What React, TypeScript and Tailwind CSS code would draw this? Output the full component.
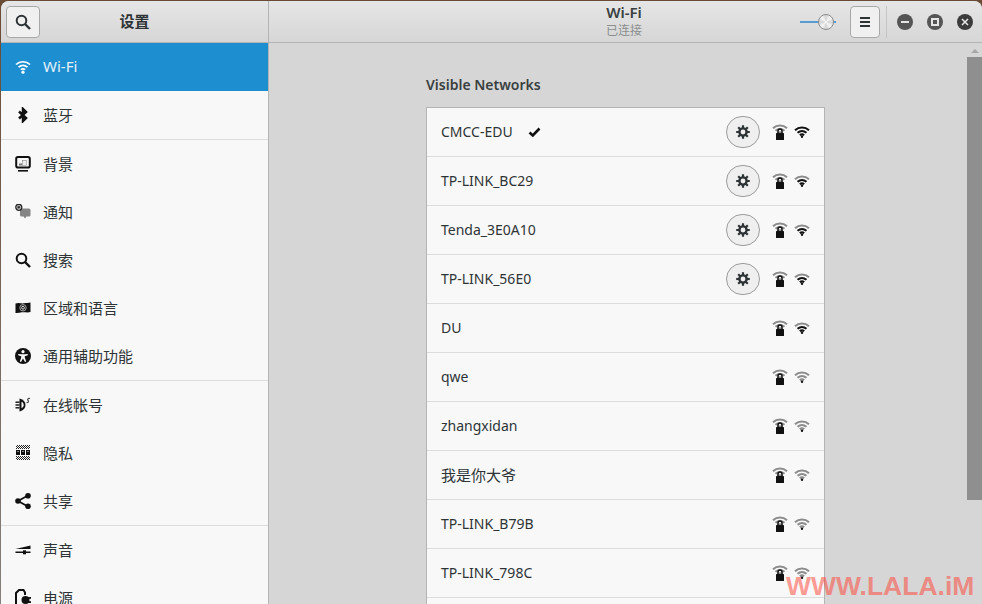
import React from 'react';

const FONT = { fontFamily: '"Noto Sans", "Noto Sans CJK SC", sans-serif' };

const WifiGlyph = ({ strong, mid, weak, dot }: { strong: string; mid: string; weak: string; dot: string }) => (
    <svg className="block" width="16" height="12" viewBox="0 0 16 12" fill="none" strokeWidth="2.100">
        <path d="M1 4.200C5 0.500 11 0.500 15 4.200" stroke={strong} />
        <path d="M3.500 6.800C6.200 4.600 9.800 4.600 12.500 6.800" stroke={mid} />
        <path d="M5.800 9.200C7.200 8.200 8.800 8.200 10.200 9.200" stroke={weak} />
        <circle cx="8" cy="10.800" r="1.200" fill={dot} />
    </svg>
);

const Signal = ({ level }: { level: number }) => {
    const on = '#111';
    const off = '#8c8c8c';
    return <WifiGlyph strong={level > 3 ? on : off} mid={level > 2 ? on : off} weak={level > 1 ? on : off} dot={on} />;
};

const LockedSignal = () => (
    <div className="relative w-4 h-4">
        <WifiGlyph strong="#8c8c8c" mid="#8c8c8c" weak="#8c8c8c" dot="#8c8c8c" />
        <svg className="absolute left-[4px] top-[4px]" width="8" height="12" viewBox="0 0 8 12">
            <path d="M2 5V3a2 2 0 0 1 4 0V5" fill="none" stroke="#111" strokeWidth="1.500" />
            <rect x="0" y="5" width="8" height="7" rx="0.500" fill="#111" />
        </svg>
    </div>
);

const Gear = () => (
    <svg width="14" height="14" viewBox="0 0 14 14">
        <circle cx="7" cy="7" r="3.600" fill="none" stroke="#2e3436" strokeWidth="2.400" />
        <g stroke="#2e3436" strokeWidth="2.200">
            <path d="M7 0.200V3" />
            <path d="M7 11V13.800" />
            <path d="M0.200 7H3" />
            <path d="M11 7H13.800" />
            <path d="M2.200 2.200L4.200 4.200" />
            <path d="M9.800 9.800L11.800 11.800" />
            <path d="M11.800 2.200L9.800 4.200" />
            <path d="M4.200 9.800L2.200 11.800" />
        </g>
    </svg>
);

const SearchIcon = ({ color = '#111' }: { color?: string }) => (
    <svg width="16" height="16" viewBox="0 0 16 16" fill="none" stroke={color} strokeWidth="2">
        <circle cx="6.500" cy="6.500" r="4.800" />
        <path d="M10 10L15 15" strokeWidth="2.400" />
    </svg>
);

const BluetoothIcon = () => (
    <svg width="16" height="16" viewBox="0 0 16 16" fill="none" stroke="#111" strokeWidth="2.500">
        <path d="M4 4.500L11 11L8 14V2L11 5L4 11.500" />
    </svg>
);

const BackgroundIcon = () => (
    <svg width="16" height="16" viewBox="0 0 16 16">
        <rect x="1.200" y="1" width="13.600" height="10.600" rx="1.800" fill="none" stroke="#111" strokeWidth="2" />
        <path d="M4 9.500V7.500H7V4H11.500V9.500Z" fill="#777" />
        <path d="M7.500 4.500H11V9H7.500Z" fill="#eee" />
        <rect x="3" y="14" width="10" height="1.600" fill="#111" />
    </svg>
);

const NotificationIcon = () => (
    <svg width="16" height="16" viewBox="0 0 16 16">
        <path d="M5 4.500H14a1.500 1.500 0 0 1 1.500 1.500V11a1.500 1.500 0 0 1-1.500 1.500H11.500L10 14.500L8.500 12.500H6.500a1.500 1.500 0 0 1-1.500-1.500Z" fill="#858585" />
        <circle cx="3.800" cy="3.300" r="3" fill="#f8f8f8" stroke="#222" strokeWidth="1.300" />
        <path d="M2.500 2L5.100 4.600M5.100 2L2.500 4.600M3.800 1.500V5.100M2 3.300H5.600" stroke="#222" strokeWidth="0.800" />
    </svg>
);

const RegionIcon = () => (
    <svg width="16" height="16" viewBox="0 0 16 16">
        <path d="M0.500 3.500C4 2 6 3.800 9 3.300C11.500 2.900 13.500 3 15.500 2.500V12C12 13 10 11.800 7 12.300C4.500 12.700 2.500 13.300 0.500 13Z" fill="#111" />
        <circle cx="8" cy="7.800" r="3.200" fill="none" stroke="#aaa" strokeWidth="1" />
        <circle cx="8" cy="7.800" r="1.400" fill="none" stroke="#ddd" strokeWidth="1" />
    </svg>
);

const AccessIcon = () => (
    <svg width="16" height="16" viewBox="0 0 16 16">
        <circle cx="8" cy="8" r="8" fill="#111" />
        <circle cx="8" cy="3.700" r="1.600" fill="#f8f8f8" />
        <path d="M3.200 6L6.500 6.300H9.500L12.800 6V7.300L9.800 8.200V9.500L11.200 13.500L10 13.900L8 10.500L6 13.900L4.800 13.500L6.200 9.500V8.200L3.200 7.300Z" fill="#f8f8f8" />
    </svg>
);

const AccountsIcon = () => (
    <svg width="16" height="16" viewBox="0 0 16 16">
        <path d="M4.500 1.500C8.500 2.500 10.500 5 10.500 8C10.500 11 8.500 13.500 4.500 14.500Z" fill="#111" />
        <path d="M6.500 4.800C8 5.500 8.700 6.700 8.700 8C8.700 9.300 8 10.500 6.500 11.200Z" fill="#f8f8f8" />
        <rect x="0.500" y="4.500" width="4" height="1.400" fill="#111" />
        <rect x="0.500" y="7.300" width="4" height="1.400" fill="#111" />
        <rect x="0.500" y="10.100" width="4" height="1.400" fill="#111" />
        <path d="M15 1.500C13 1 12 2.500 13 3.500C14 4.500 13.500 6 11.500 5.500" fill="none" stroke="#444" strokeWidth="1.100" />
    </svg>
);

const PrivacyIcon = () => (
    <svg width="16" height="16" viewBox="0 0 16 16">
        <defs>
            <pattern id="dither" width="2" height="2" patternUnits="userSpaceOnUse">
                <rect width="1" height="1" fill="#222" />
                <rect x="1" y="1" width="1" height="1" fill="#222" />
            </pattern>
        </defs>
        <rect x="1" y="0" width="14" height="4" fill="url(#dither)" />
        <rect x="1" y="11" width="14" height="4" fill="url(#dither)" />
        <rect x="1" y="5" width="4" height="5" fill="#111" />
        <rect x="6" y="5" width="4" height="5" fill="#111" />
        <rect x="11" y="5" width="4" height="5" fill="#111" />
        <rect x="2.500" y="6" width="1" height="1" fill="#f8f8f8" />
        <rect x="7.500" y="6" width="1" height="1" fill="#f8f8f8" />
        <rect x="12.500" y="6" width="1" height="1" fill="#f8f8f8" />
    </svg>
);

const ShareIcon = () => (
    <svg width="16" height="16" viewBox="0 0 16 16" fill="#111">
        <path d="M13 2.500L3 8L13 13.500" fill="none" stroke="#111" strokeWidth="1.800" />
        <circle cx="13" cy="2.800" r="2.800" />
        <circle cx="3" cy="8" r="2.800" />
        <circle cx="13" cy="13.200" r="2.800" />
    </svg>
);

const SoundIcon = () => (
    <svg width="16" height="16" viewBox="0 0 16 16" fill="#111">
        <path d="M0.500 7L15.500 3.500V7Z" />
        <rect x="0.500" y="9.500" width="15" height="1.500" />
        <rect x="8" y="8.300" width="3" height="4" />
    </svg>
);

const PowerIcon = () => (
    <svg width="16" height="18" viewBox="0 0 16 18">
        <path d="M1 18V4L4 1H8.500L10 3.500V6" fill="none" stroke="#111" strokeWidth="2" />
        <circle cx="10.500" cy="11" r="4" fill="#111" />
        <rect x="12" y="8" width="4" height="1.800" fill="#111" />
        <rect x="12" y="12.200" width="4" height="1.800" fill="#111" />
        <path d="M1 17H9" stroke="#111" strokeWidth="2" />
    </svg>
);

const WifiSideIcon = () => (
    <svg width="16" height="14" viewBox="0 0 16 14" fill="none" stroke="#fff" strokeWidth="1.700">
        <path d="M1 4.500C4.800 0.800 11.200 0.800 15 4.500" />
        <path d="M3.500 7.200C6.200 4.900 9.800 4.900 12.500 7.200" />
        <path d="M5.800 9.600C7.100 8.700 8.900 8.700 10.200 9.600" />
        <circle cx="8" cy="12.200" r="1.600" fill="#fff" stroke="none" />
    </svg>
);

const sidebarGroups: { icon: React.ReactNode; label: string; active?: boolean }[][] = [
    [
        { icon: <WifiSideIcon />, label: 'Wi-Fi', active: true },
        { icon: <BluetoothIcon />, label: '蓝牙' },
    ],
    [
        { icon: <BackgroundIcon />, label: '背景' },
        { icon: <NotificationIcon />, label: '通知' },
        { icon: <SearchIcon />, label: '搜索' },
        { icon: <RegionIcon />, label: '区域和语言' },
        { icon: <AccessIcon />, label: '通用辅助功能' },
    ],
    [
        { icon: <AccountsIcon />, label: '在线帐号' },
        { icon: <PrivacyIcon />, label: '隐私' },
        { icon: <ShareIcon />, label: '共享' },
    ],
    [
        { icon: <SoundIcon />, label: '声音' },
        { icon: <PowerIcon />, label: '电源' },
    ],
];

const networks = [
    { name: 'CMCC-EDU', connected: true, gear: true, level: 4 },
    { name: 'TP-LINK_BC29', gear: true, level: 3 },
    { name: 'Tenda_3E0A10', gear: true, level: 3 },
    { name: 'TP-LINK_56E0', gear: true, level: 3 },
    { name: 'DU', level: 3 },
    { name: 'qwe', level: 1 },
    { name: 'zhangxidan', level: 1 },
    { name: '我是你大爷', level: 1, cjk: true },
    { name: 'TP-LINK_B79B', level: 1 },
    { name: 'TP-LINK_798C', level: 1 },
    { name: '', level: 1 },
];

const WindowButton = ({ children, bg }: { children: React.ReactNode; bg: string }) => (
    <div className={`w-4 h-4 rounded-full flex items-center justify-center ${bg}`}>{children}</div>
);

export default function App() {
    return (
        <div className="relative w-[982px] h-[604px] overflow-hidden bg-gradient-to-b from-[#6a4b36] to-[#85807c] pt-px pl-px" style={FONT}>
            <div className="h-[640px] bg-[#d6d6d6] rounded-t-lg overflow-hidden flex flex-col text-[#2e3436]">
                <header className="h-[42px] shrink-0 flex bg-gradient-to-b from-[#e6e6e6] to-[#d6d6d6] border-b border-[#b4b4b4]">
                    <div className="w-[268px] shrink-0 flex items-center pl-[5px] border-r border-[#b4b4b4] relative">
                        <button className="w-[34px] h-8 rounded-[4px] border border-[#a8a8a8] bg-[#f0f0f0] flex items-center justify-center">
                            <SearchIcon color="#2e3436" />
                        </button>
                        <span className="absolute left-0 right-0 text-center text-[15px] font-bold leading-none">设置</span>
                    </div>
                    <div className="flex-1 relative flex items-center justify-end pr-[9px]">
                        <div className="absolute left-0 right-[3px] top-[2px] flex flex-col items-center">
                            <span className="text-[15px] font-semibold leading-[19px] text-[#3a3f41]">Wi-Fi</span>
                            <span className="text-xs leading-[17px] text-[#8a8e8e]">已连接</span>
                        </div>
                        <div className="relative w-[36px] h-4 mr-[14px]">
                            <div className="absolute left-0 right-0 top-[7px] h-0.5 bg-[#5a9bd0]" />
                            <div className="absolute right-[2px] top-0 w-4 h-4 rounded-full border border-[#8a8a8a] bg-[conic-gradient(#d4d4d4,#f6f6f6,#d4d4d4,#f6f6f6,#d4d4d4,#f6f6f6,#d4d4d4,#f6f6f6,#d4d4d4)]" />
                        </div>
                        <button className="w-[30px] h-8 rounded-[4px] border border-[#a8a8a8] bg-[#f0f0f0] flex flex-col items-center justify-center gap-[2px]">
                            <span className="w-[10px] h-0.5 bg-[#2e3436]" />
                            <span className="w-[10px] h-0.5 bg-[#2e3436]" />
                            <span className="w-[10px] h-0.5 bg-[#2e3436]" />
                        </button>
                        <div className="w-px h-8 bg-[#c4c4c4] mx-[6px]" />
                        <div className="flex items-center gap-[14px] ml-[4px]">
                            <WindowButton bg="bg-[#555]">
                                <span className="w-2 h-0.5 bg-[#e4e4e4]" />
                            </WindowButton>
                            <WindowButton bg="bg-[#555]">
                                <span className="w-2 h-2 border-2 border-[#e4e4e4]" />
                            </WindowButton>
                            <WindowButton bg="bg-[#3c3c3c]">
                                <svg width="8" height="8" viewBox="0 0 8 8" stroke="#e8e8e8" strokeWidth="1.500">
                                    <path d="M1 1L7 7M7 1L1 7" />
                                </svg>
                            </WindowButton>
                        </div>
                    </div>
                </header>
                <div className="flex-1 flex min-h-0">
                    <aside className="w-[268px] shrink-0 bg-[#f8f8f8] border-r border-[#b4b4b4] flex flex-col">
                        {sidebarGroups.map((group, i) => (
                            <div key={i} className={i < sidebarGroups.length - 1 ? 'border-b border-[#dcdcdc]' : ''}>
                                {group.map((item) => (
                                    <div
                                        key={item.label}
                                        className={`h-12 flex items-center pl-[14px] gap-3 text-[15px] ${item.active ? 'bg-[#1d8fd1] text-[#e4f1f9]' : 'text-[#2e3436]'}`}
                                    >
                                        <span className="w-4 flex justify-center">{item.icon}</span>
                                        <span className={item.active ? '-mt-0.5' : ''}>{item.label}</span>
                                    </div>
                                ))}
                            </div>
                        ))}
                    </aside>
                    <main className="flex-1 relative flex flex-col items-center">
                        <div className="w-[399px] pt-8">
                            <h2 className="text-sm font-semibold leading-5 text-[#3a3f41] mb-3">Visible Networks</h2>
                            <div className="border border-[#b4b4b4] bg-[#f8f8f8]">
                                {networks.map((n, i) => (
                                    <div key={i} className="h-[49px] flex items-center px-[14px] border-b border-[#dcdcdc] text-sm">
                                        <span className={n.cjk ? 'text-[15px] mt-0.5' : ''}>{n.name}</span>
                                        {n.connected && (
                                            <svg className="ml-[15px]" width="13" height="12" viewBox="0 0 13 12">
                                                <path d="M1.500 6.500L4.800 9.500L11.500 2.500" fill="none" stroke="#111" strokeWidth="2.600" />
                                            </svg>
                                        )}
                                        <div className="flex-1" />
                                        {n.gear && (
                                            <button className="w-[34px] h-8 rounded-full border border-[#9c9c9c] bg-[#efefef] flex items-center justify-center mr-[12px]">
                                                <Gear />
                                            </button>
                                        )}
                                        <div className="flex items-center gap-[6px]">
                                            <LockedSignal />
                                            <Signal level={n.level} />
                                        </div>
                                    </div>
                                ))}
                            </div>
                        </div>
                        <div className="absolute right-0 top-[6px] w-[15px] flex flex-col items-center">
                            <div className="w-0 h-0 border-x-[4px] border-x-transparent border-b-[4px] border-b-[#a8a8a8] mb-[4px]" />
                            <div className="w-[15px] h-[443px] bg-[#8f8f8f]" />
                        </div>
                    </main>
                </div>
            </div>
            <span className="absolute left-[786px] top-[571px] text-[26.5px] leading-[30px] font-bold text-[#ff3b30]/50" style={{ fontFamily: '"Liberation Sans", sans-serif' }}>
                WWW.LALA.iM
            </span>
        </div>
    );
}
